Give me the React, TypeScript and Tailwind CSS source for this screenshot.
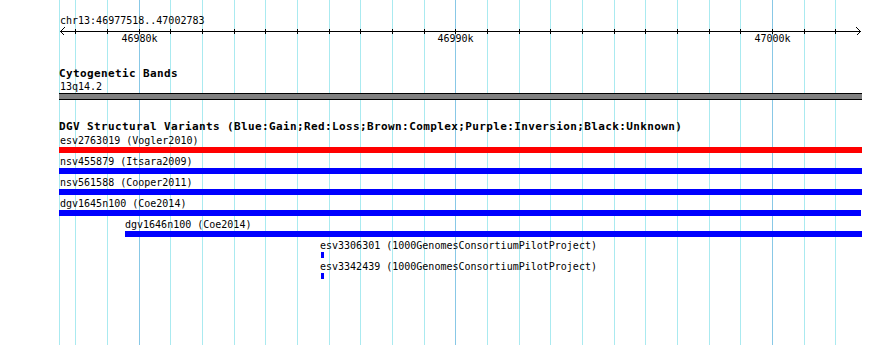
import React from 'react'

const minorXs = Array.from({ length: 25 }, (_, k) => Math.round(75.4 + k * 31.66))
const majorKs = [2, 12, 22]

const tickLabels = [
  { x: 139.5, text: '46980k' },
  { x: 455.5, text: '46990k' },
  { x: 772.5, text: '47000k' },
]

const features = [
  { name: 'esv2763019 (Vogler2010)', x: 59, w: 803, color: 'bg-[#ff0000]', lx: 60 },
  { name: 'nsv455879 (Itsara2009)', x: 59, w: 803, color: 'bg-[#0000ff]', lx: 60 },
  { name: 'nsv561588 (Cooper2011)', x: 59, w: 803, color: 'bg-[#0000ff]', lx: 60 },
  { name: 'dgv1645n100 (Coe2014)', x: 59, w: 802, color: 'bg-[#0000ff]', lx: 60 },
  { name: 'dgv1646n100 (Coe2014)', x: 125, w: 737, color: 'bg-[#0000ff]', lx: 125 },
  { name: 'esv3306301 (1000GenomesConsortiumPilotProject)', x: 321, w: 3, color: 'bg-[#0000ff]', lx: 320 },
  { name: 'esv3342439 (1000GenomesConsortiumPilotProject)', x: 321, w: 3, color: 'bg-[#0000ff]', lx: 320 },
]

function Grid() {
  return (
    <svg className="absolute inset-0" width="890" height="345" shapeRendering="crispEdges">
      <rect x="59" y="0" width="1" height="345" fill="#aaeaf0" />
      {minorXs.map((x, k) => (
        <rect key={x} x={x} y="0" width="1" height="345" fill={majorKs.includes(k) ? '#88c8e6' : '#aaeaf0'} />
      ))}
    </svg>
  )
}

function Ruler() {
  return (
    <svg className="block" width="890" height="18" shapeRendering="crispEdges">
      <rect x="60" y="4" width="801" height="1" fill="#000" />
      {minorXs.map((x) => (
        <rect key={x} x={x} y="2" width="1" height="5" fill="#000" />
      ))}
      <polyline points="64.5,0.5 60.5,4.5 64.5,8.5" fill="none" stroke="#000" strokeWidth="1" />
      <polyline points="856.5,0.5 860.5,4.5 856.5,8.5" fill="none" stroke="#000" strokeWidth="1" />
      {tickLabels.map((t) => (
        <text
          key={t.text}
          x={t.x}
          y="15"
          textAnchor="middle"
          fontFamily="'DejaVu Sans Mono', monospace"
          fontSize="10"
          fill="#000"
          shapeRendering="auto"
        >
          {t.text}
        </text>
      ))}
    </svg>
  )
}

export default function App() {
  return (
    <div className="relative w-[890px] h-[345px] overflow-hidden bg-white text-black font-['DejaVu_Sans_Mono',monospace]">
      <Grid />
      <div className="relative pt-[14px]">
        <div className="ml-[60px] h-[13px] leading-[13px] text-[10px] whitespace-nowrap">chr13:46977518..47002783</div>
        <Ruler />

        <div className="mt-[22px] ml-[59px] h-[13px] leading-[13px] text-[11px] font-bold tracking-[0.38px] whitespace-nowrap">
          Cytogenetic Bands
        </div>
        <div className="ml-[60px] h-[13px] leading-[13px] text-[10px] whitespace-nowrap">13q14.2</div>
        <div className="ml-[59px] w-[803px] h-[7px] border-y border-black bg-[#808080]" />

        <div className="mt-[20px] ml-[59px] h-[13px] leading-[13px] text-[11px] font-bold tracking-[0.38px] whitespace-nowrap">
          DGV Structural Variants (Blue:Gain;Red:Loss;Brown:Complex;Purple:Inversion;Black:Unknown)
        </div>
        <div className="mt-px flex flex-col gap-[2px]">
          {features.map((f) => (
            <div key={f.name}>
              <div
                className="h-[13px] leading-[13px] text-[10px] whitespace-nowrap"
                style={{ marginLeft: f.lx }}
              >
                {f.name}
              </div>
              <div className={`h-[6px] ${f.color}`} style={{ marginLeft: f.x, width: f.w }} />
            </div>
          ))}
        </div>
      </div>
    </div>
  )
}
